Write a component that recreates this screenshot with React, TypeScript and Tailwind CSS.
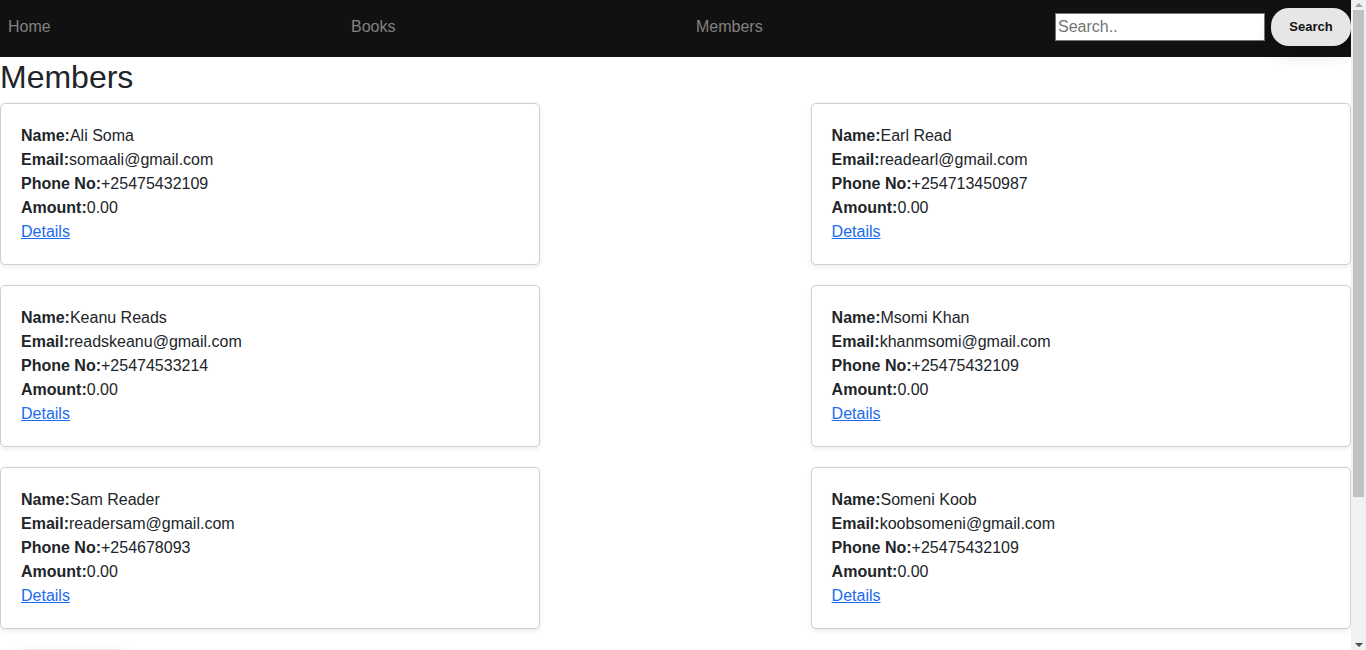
import React from 'react'

const members = [
  { name: 'Ali Soma', email: 'somaali@gmail.com', phone: '+25475432109', amount: '0.00' },
  { name: 'Earl Read', email: 'readearl@gmail.com', phone: '+254713450987', amount: '0.00' },
  { name: 'Keanu Reads', email: 'readskeanu@gmail.com', phone: '+25474533214', amount: '0.00' },
  { name: 'Msomi Khan', email: 'khanmsomi@gmail.com', phone: '+25475432109', amount: '0.00' },
  { name: 'Sam Reader', email: 'readersam@gmail.com', phone: '+254678093', amount: '0.00' },
  { name: 'Someni Koob', email: 'koobsomeni@gmail.com', phone: '+25475432109', amount: '0.00' },
]

function MemberCard({ member }: { member: (typeof members)[number] }) {
  return (
    <div className="w-[40%] rounded-[5px] border border-[#cfcfcf] bg-white p-5 text-base leading-6 text-[#212529] shadow-[0_2px_5px_rgba(0,0,0,0.08)]">
      <p>
        <b>Name:</b>
        {member.name}
      </p>
      <p>
        <b>Email:</b>
        {member.email}
      </p>
      <p>
        <b>Phone No:</b>
        {member.phone}
      </p>
      <p>
        <b>Amount:</b>
        {member.amount}
      </p>
      <a href="#" className="text-[#1a6bf0] underline">
        Details
      </a>
    </div>
  )
}

// page scrollbar, as the browser showed it
function ScrollBar() {
  return (
    <div className="fixed top-0 right-0 h-screen w-[15px] bg-[#f1f1f1]">
      <div className="absolute top-[3px] left-[4px] h-0 w-0 border-x-[4px] border-b-[4px] border-x-transparent border-b-[#a3a3a3]" />
      <div className="absolute top-[10px] left-[2px] h-[487px] w-[11px] bg-[#c1c1c1]" />
      <div className="absolute bottom-[3px] left-[4px] h-0 w-0 border-x-[4px] border-t-[4px] border-x-transparent border-t-[#505050]" />
    </div>
  )
}

export default function App() {
  return (
    <div className="min-h-[720px] w-[1351px] bg-white font-['Liberation_Sans',Arial,sans-serif]">
      <nav className="flex h-[57px] items-center bg-[#111111] pb-1 text-base text-[#818181]">
        <a href="#" className="w-[351px] pl-2">
          Home
        </a>
        <a href="#" className="w-[345px]">
          Books
        </a>
        <a href="#" className="flex-1">
          Members
        </a>
        <form className="flex items-center" onSubmit={(e) => e.preventDefault()}>
          <input
            type="text"
            placeholder="Search.."
            className="h-[28px] w-[210px] border border-[#767676] bg-white px-0.5 text-base text-black placeholder:text-[#757575] outline-none"
          />
          <button
            type="submit"
            className="ml-1.5 h-[38px] w-[80px] rounded-[18px] bg-[#e6e6e6] text-[13px] font-bold text-[#111] shadow-[0_8px_16px_rgba(0,0,0,0.15)]"
          >
            Search
          </button>
        </form>
      </nav>

      <h1 className="mt-0.5 mb-[7px] text-[32px] leading-[37px] text-[#212529]">Members</h1>

      <div className="flex flex-wrap justify-between gap-y-5">
        {members.map((m) => (
          <MemberCard key={m.name} member={m} />
        ))}
      </div>

      <div className="mt-5 ml-2.5 h-[36px] w-[125px] rounded-[18px] border border-[#ececec] bg-white shadow-[0_6px_14px_rgba(0,0,0,0.12)]" />

      <ScrollBar />
    </div>
  )
}
